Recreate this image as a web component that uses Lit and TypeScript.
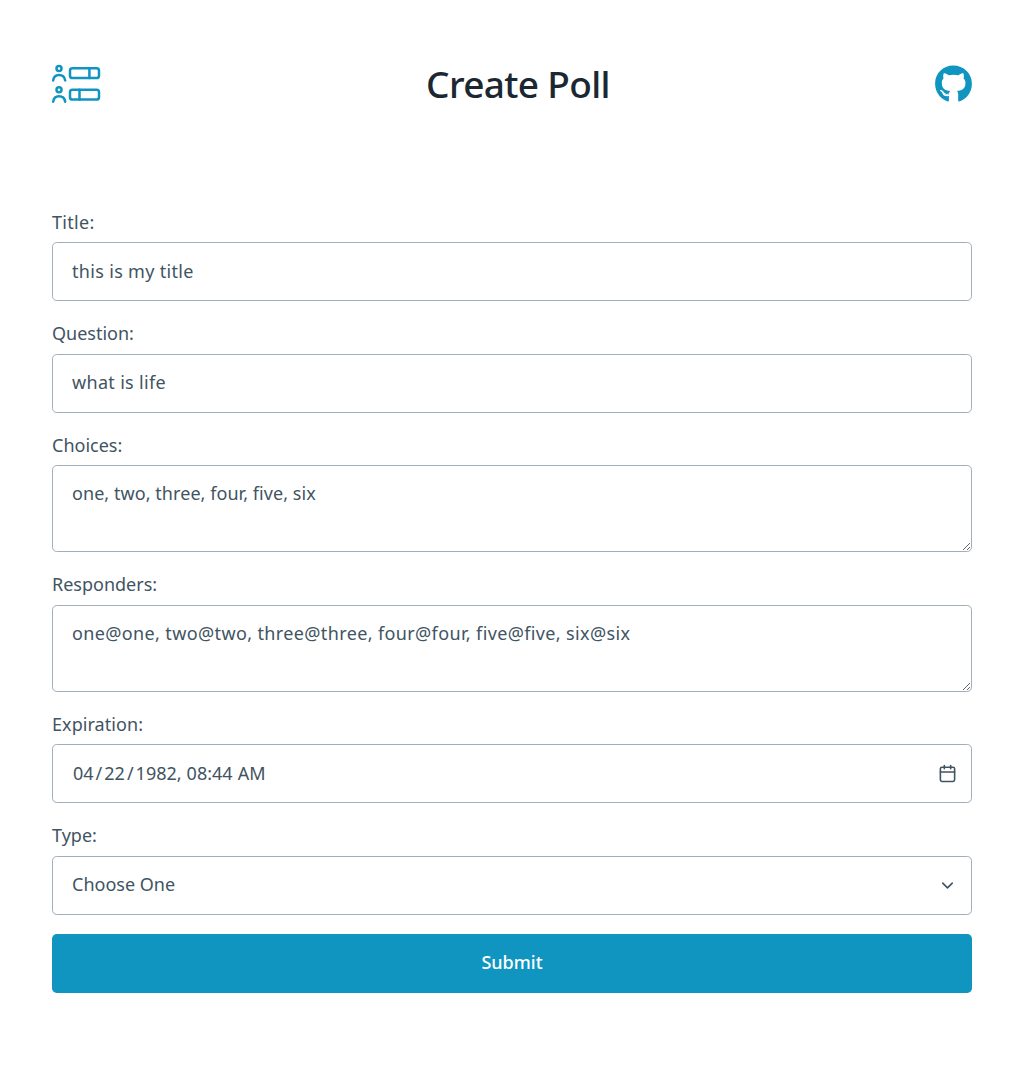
import { LitElement, html, css } from "lit";
import { customElement } from "lit/decorators.js";

@customElement("app-root")
export class AppRoot extends LitElement {
  static styles = css`
    :host {
      display: block;
      min-height: 1078px;
      background: #fff;
      color: #415462;
      font-family: "Noto Sans", "Open Sans", sans-serif;
      font-size: 18px;
      font-weight: 450;
      line-height: 28.5px;
    }
    * { box-sizing: border-box; }
    .page { padding: 57px 52px 0; }
    .header {
      display: flex;
      align-items: center;
      justify-content: space-between;
      height: 54px;
      margin-bottom: 98.2px;
    }
    .link { display: flex; color: #1095c1; }
    .heading {
      margin: 0;
      color: #1b2832;
      font-size: 37px;
      font-weight: 500;
      line-height: 54px;
      letter-spacing: -0.65px;
    }
    .form { display: flex; flex-direction: column; }
    .label {
      display: block;
      height: 28.5px;
      margin-bottom: 4.75px;
      line-height: 26.9px;
    }
    .control {
      display: block;
      width: 100%;
      height: 59px;
      margin: 0 0 19px;
      padding: 13.55px 19px 14.95px;
      border: 1px solid #a2afb9;
      border-radius: 4.75px;
      background: #fff;
      color: inherit;
      font: inherit;
      outline: none;
    }
    .area { height: 87.5px; resize: vertical; overflow: auto; }
    .picker {
      display: flex;
      align-items: center;
      justify-content: space-between;
      padding: 14.25px 14.25px 14.25px 19px;
    }
    .picker-text { margin-top: -1.6px; }
    .icon { display: block; flex: none; }
    .date { display: flex; padding-left: 1px; }
    .slash { padding: 0 2px; }
    .time { margin-left: 5px; }
    .submit {
      height: 59px;
      padding: 0 0 1.6px;
      border: 0;
      border-radius: 4.75px;
      background: #1095c1;
      color: #fff;
      font: inherit;
      font-weight: 500;
    }
    .spaced { letter-spacing: 0.32px; }
    .wide { letter-spacing: 0.37px; }
    .snug { letter-spacing: 0.06px; }
  `;

  render() {
    return html`
      <main class="page">
        <header class="header">
          <a class="link" aria-label="Polls">
            <svg width="49" height="40" viewBox="0 0 49 40" fill="none" stroke="currentColor" stroke-width="2.5" stroke-linecap="round">
              <circle cx="7" cy="4.5" r="2.5" />
              <path d="M1.2 16.4C1.7 12.8 3.8 11 7 11S12.6 12.8 13.2 16.4" />
              <rect x="18" y="4.3" width="29" height="9.8" rx="2.4" />
              <path d="M37.4 4.3v9.8" />
              <circle cx="7" cy="25.8" r="2.5" />
              <path d="M1.2 37.7C1.7 34.1 3.8 32.3 7 32.3S12.6 34.1 13.2 37.7" />
              <rect x="18" y="25.8" width="29" height="9.8" rx="2.4" />
              <path d="M27.5 25.8v9.8" />
            </svg>
          </a>
          <h1 class="heading">Create Poll</h1>
          <a class="link" aria-label="GitHub">
            <svg width="37" height="38" viewBox="0 0 496 512" fill="currentColor">
              <path d="M165.9 397.4c0 2-2.3 3.6-5.2 3.6-3.3.3-5.6-1.3-5.6-3.6 0-2 2.3-3.6 5.2-3.6 3-.3 5.6 1.3 5.6 3.6zm-31.1-4.5c-.7 2 1.3 4.3 4.3 4.9 2.6 1 5.6 0 6.2-2s-1.3-4.3-4.3-5.2c-2.6-.7-5.5.3-6.2 2.3zm44.2-1.7c-2.9.7-4.9 2.6-4.6 4.9.3 2 2.9 3.3 5.9 2.6 2.9-.7 4.9-2.6 4.6-4.6-.3-1.9-3-3.2-5.9-2.9zM244.8 8C106.1 8 0 113.3 0 252c0 110.9 69.8 205.8 169.5 239.2 12.8 2.3 17.3-5.6 17.3-12.1 0-6.2-.3-40.4-.3-61.4 0 0-70 15-84.7-29.8 0 0-11.4-29.1-27.8-36.6 0 0-22.9-15.7 1.6-15.4 0 0 24.9 2 38.6 25.8 21.9 38.6 58.6 27.5 72.9 20.9 2.3-16 8.8-27.1 16-33.7-55.9-6.2-112.3-14.3-112.3-110.5 0-27.5 7.6-41.3 23.6-58.9-2.6-6.5-11.1-33.3 2.6-67.9 20.9-6.5 69 27 69 27 20-5.6 41.5-8.5 62.8-8.5s42.8 2.9 62.8 8.5c0 0 48.1-33.6 69-27 13.7 34.7 5.2 61.4 2.6 67.9 16 17.7 25.8 31.5 25.8 58.9 0 96.5-58.9 104.2-114.8 110.5 9.2 7.9 17 22.9 17 46.4 0 33.7-.3 75.4-.3 83.6 0 6.5 4.6 14.4 17.3 12.1C428.2 457.8 496 362.9 496 252 496 113.3 383.5 8 244.8 8z" />
            </svg>
          </a>
        </header>
        <form class="form">
          <label class="label spaced" for="title">Title:</label>
          <input class="control spaced" id="title" .value=${"this is my title"} />
          <label class="label" for="question">Question:</label>
          <input class="control spaced" id="question" .value=${"what is life"} />
          <label class="label" for="choices">Choices:</label>
          <textarea class="control area snug" id="choices" spellcheck="false" .value=${"one, two, three, four, five, six"}></textarea>
          <label class="label" for="responders">Responders:</label>
          <textarea class="control area wide" id="responders" spellcheck="false" .value=${"one@one, two@two, three@three, four@four, five@five, six@six"}></textarea>
          <span class="label snug">Expiration:</span>
          <div class="control picker">
            <span class="date picker-text"><span>04</span><span class="slash">/</span><span>22</span><span class="slash">/</span><span>1982,</span><span class="time">08:44</span><span class="time">AM</span></span>
            <svg class="icon" width="19" height="19" viewBox="0 0 24 24" fill="none" stroke="#415462" stroke-width="2" stroke-linecap="round" stroke-linejoin="round">
              <rect x="3" y="4" width="18" height="18" rx="2" />
              <path d="M16 2v4M8 2v4M3 10h18" />
            </svg>
          </div>
          <span class="label">Type:</span>
          <div class="control picker">
            <span class="picker-text">Choose One</span>
            <svg class="icon" width="19" height="19" viewBox="0 0 24 24" fill="none" stroke="#415462" stroke-width="2" stroke-linecap="round" stroke-linejoin="round">
              <path d="M6 9l6 6 6-6" />
            </svg>
          </div>
          <button class="submit" type="button">Submit</button>
        </form>
      </main>
    `;
  }
}
